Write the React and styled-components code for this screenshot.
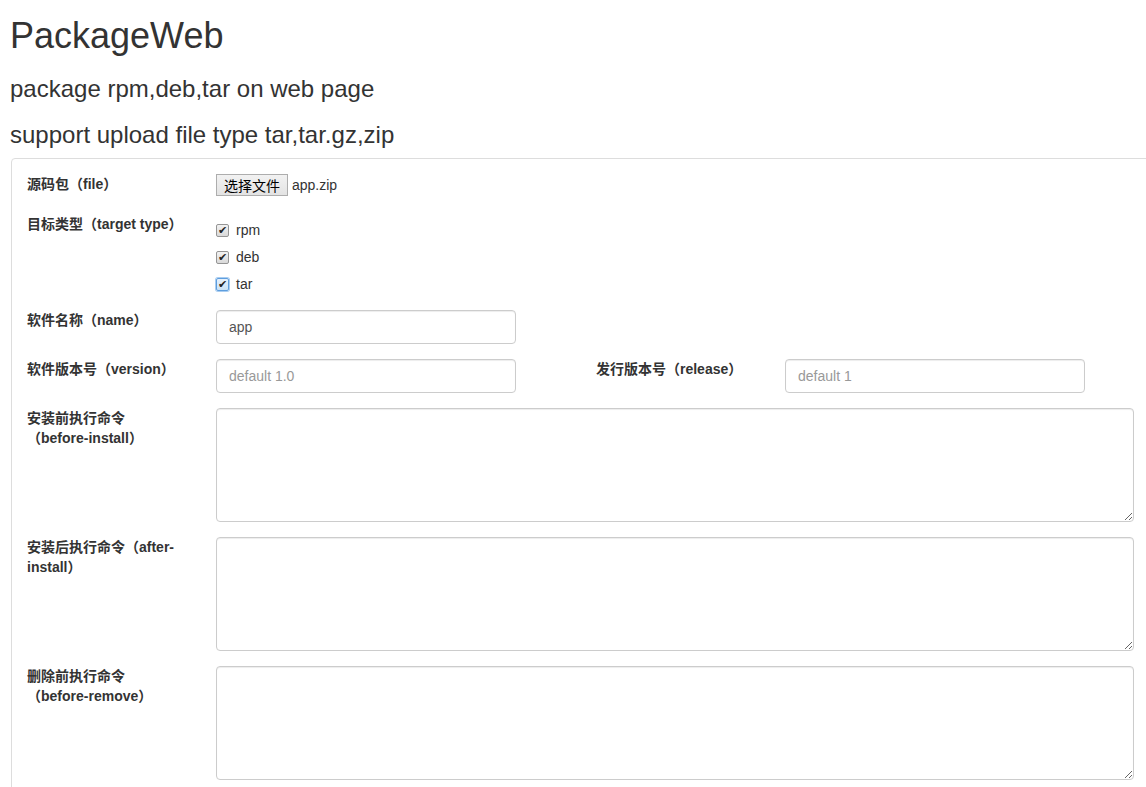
import React from "react";
import styled, { createGlobalStyle } from "styled-components";

const GlobalStyle = createGlobalStyle`
  body {
    margin: 0;
    overflow: hidden;
    background: #fff;
    color: #333;
    font-family: "Liberation Sans", Arial, "Noto Sans CJK SC", sans-serif;
    font-size: 14px;
    line-height: 20px;
    text-spacing-trim: space-all;
  }
`;

const types = [
  { name: "rpm", focus: false },
  { name: "deb", focus: false },
  { name: "tar", focus: true },
];

const App = () => {
  return (
    <>
      <GlobalStyle />
      <Page lang="zh-CN">
        <Title>PackageWeb</Title>
        <SubTitle>package rpm,deb,tar on web page</SubTitle>
        <SubTitle>support upload file type tar,tar.gz,zip</SubTitle>

        <Panel>
          <FormRow minH="25px">
            <Label>源码包（file）</Label>
            <FileField>
              <FileButton type="button">选择文件</FileButton>
              <FileName>app.zip</FileName>
            </FileField>
          </FormRow>

          <FormRow minH="81px">
            <Label>目标类型（target type）</Label>
            <CheckList>
              {types.map((t) => (
                <CheckItem key={t.name}>
                  <CheckBox focus={t.focus}>✔</CheckBox>
                  {t.name}
                </CheckItem>
              ))}
            </CheckList>
          </FormRow>

          <FormRow>
            <Label>软件名称（name）</Label>
            <Input defaultValue="app" />
          </FormRow>

          <FormRow>
            <Label>软件版本号（version）</Label>
            <Input placeholder="default 1.0" />
            <Spacer />
            <Label>发行版本号（release）</Label>
            <Input placeholder="default 1" />
          </FormRow>

          <FormRow>
            <Label>安装前执行命令（before-install）</Label>
            <TextArea rows={5} />
          </FormRow>

          <FormRow>
            <Label>安装后执行命令（after-install）</Label>
            <TextArea rows={5} />
          </FormRow>

          <FormRow>
            <Label>删除前执行命令（before-remove）</Label>
            <TextArea rows={5} />
          </FormRow>
        </Panel>
      </Page>
    </>
  );
};

const Page = styled.div`
  padding-left: 10px;
`;

const Title = styled.h1`
  margin: 16px 0 10px;
  font-size: 36px;
  font-weight: 500;
  line-height: 1.1;
  color: #333;
`;

const SubTitle = styled.h3`
  margin: 20px 0 10px;
  font-size: 24px;
  font-weight: 500;
  line-height: 1.1;
  color: #333;
`;

const Panel = styled.div`
  margin-left: 1px;
  margin-right: -20px;
  padding: 15px;
  border: 1px solid #ddd;
  border-radius: 4px 0 0 0;
`;

const FormRow = styled.div`
  display: flex;
  align-items: flex-start;
  margin-bottom: 15px;
  min-height: ${(p) => p.minH || "0"};
`;

const Label = styled.label`
  flex-shrink: 0;
  width: 158px;
  padding-right: 31px;
  font-weight: bold;
  line-height: 20px;
  color: #333;
  text-spacing-trim: space-all;
`;

const FileField = styled.div`
  display: flex;
  align-items: center;
`;

const FileButton = styled.button`
  height: 22px;
  padding: 0 7px;
  margin: 0;
  border: 1px solid #adadad;
  border-radius: 0;
  background: linear-gradient(#f2f2f2, #e3e3e3);
  color: #000;
  font-family: "Noto Sans CJK SC", sans-serif;
  font-size: 14px;
  line-height: 20px;
`;

const FileName = styled.span`
  margin-left: 4px;
  font-size: 14px;
  color: #333;
`;

const CheckList = styled.div`
  display: flex;
  flex-direction: column;
  gap: 7px;
  padding-top: 6px;
`;

const CheckItem = styled.div`
  display: flex;
  align-items: center;
  gap: 7px;
  height: 20px;
  color: #333;
`;

const CheckBox = styled.span`
  display: flex;
  align-items: center;
  justify-content: center;
  box-sizing: border-box;
  width: 13px;
  height: 13px;
  margin-top: 1px;
  border: 1px solid ${(p) => (p.focus ? "#5e9ede" : "#959595")};
  border-radius: 2px;
  background: ${(p) =>
    p.focus
      ? "linear-gradient(#e6f1fc, #c9e1f7)"
      : "linear-gradient(#f2f2f2, #d9d9d9)"};
  box-shadow: ${(p) => (p.focus ? "0 0 0 1px #a9cdf1" : "none")};
  color: #222;
  font-family: "DejaVu Sans", sans-serif;
  font-size: 11px;
  font-weight: bold;
  line-height: 1;
`;

const Input = styled.input`
  flex-shrink: 0;
  box-sizing: border-box;
  width: 300px;
  height: 34px;
  padding: 6px 12px;
  border: 1px solid #ccc;
  border-radius: 4px;
  box-shadow: inset 0 1px 1px rgba(0, 0, 0, 0.075);
  color: #555;
  font-family: "Liberation Sans", Arial, sans-serif;
  font-size: 14px;
  line-height: 20px;

  &::placeholder {
    color: #999;
  }
`;

const Spacer = styled.div`
  width: 80px;
  flex-shrink: 0;
`;

const TextArea = styled.textarea`
  box-sizing: border-box;
  width: 918px;
  height: 114px;
  padding: 6px 12px;
  border: 1px solid #ccc;
  border-radius: 4px;
  box-shadow: inset 0 1px 1px rgba(0, 0, 0, 0.075);
  color: #555;
  font-family: "Liberation Sans", Arial, sans-serif;
  font-size: 14px;
  line-height: 20px;
  resize: vertical;
`;

export default App;
